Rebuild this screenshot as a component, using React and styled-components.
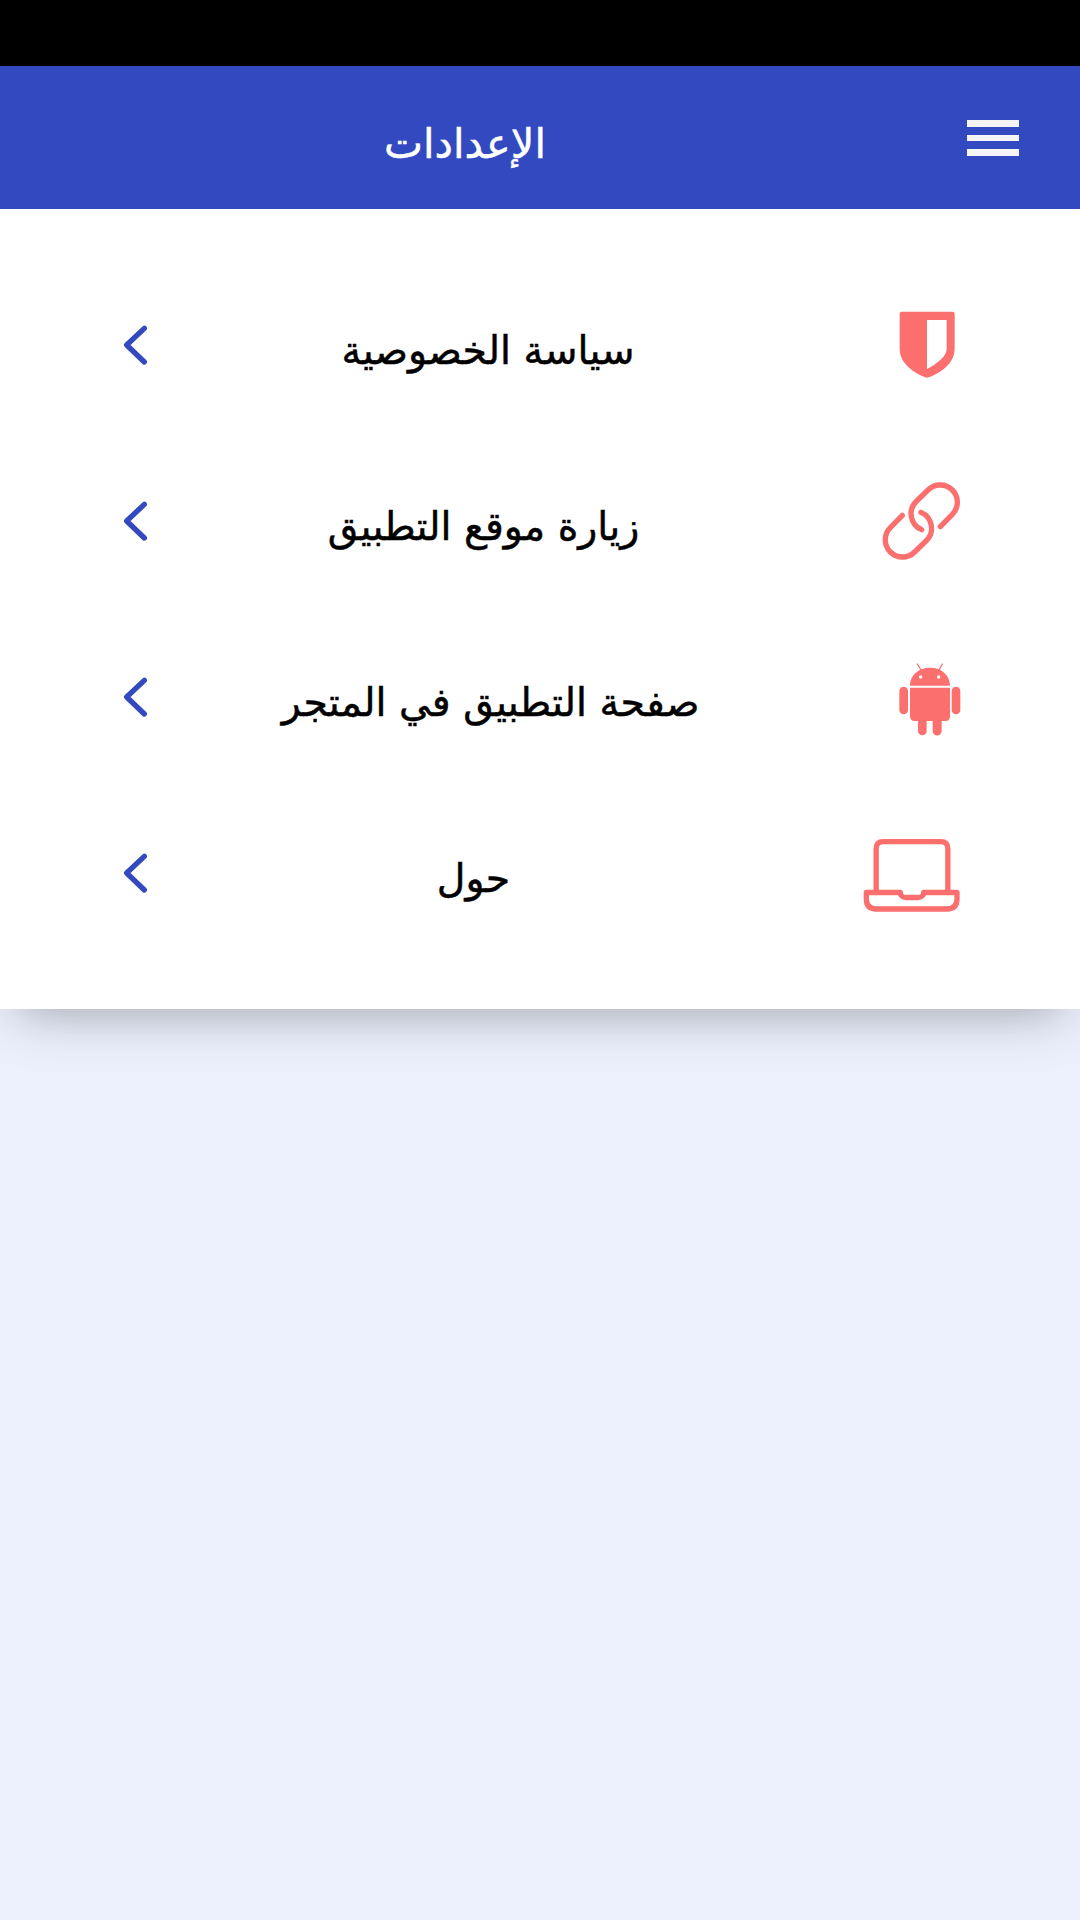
import React from "react";
import styled, { createGlobalStyle } from "styled-components";

const GlobalStyle = createGlobalStyle`
    * {
        box-sizing: border-box;
    }
    body {
        margin: 0;
        background: #ecf0fd;
        font-family: "DejaVu Sans", "Noto Sans", sans-serif;
    }
`;

const Page = styled.div`
    display: flex;
    flex-direction: column;
    min-height: 1920px;
    overflow: hidden;
`;

const StatusBar = styled.div`
    height: 66px;
    background: #000;
`;

const Header = styled.header`
    position: relative;
    z-index: 1;
    display: flex;
    align-items: center;
    justify-content: space-between;
    height: 143px;
    padding: 0 61px 0 384px;
    background: #3249bf;
    color: #fff;
`;

const MenuButton = styled.button`
    display: flex;
    flex-direction: column;
    gap: 8px;
    width: 52px;
    margin-top: 1px;
    padding: 0;
    border: 0;
    background: none;
`;

const MenuBar = styled.span`
    height: 6.5px;
    background: #f5f5f8;
`;

const Card = styled.main`
    padding: 48px 116px 48px 120px;
    background: #fff;
    box-shadow: 0 20px 50px -18px rgba(0, 0, 0, 0.34);
`;

const Row = styled.div`
    display: flex;
    align-items: center;
    height: 176px;
`;

const Label = styled.div`
    display: flex;
    justify-content: center;
    width: ${({ $width }) => $width}px;
    margin: 0 auto 0 ${({ $start }) => $start}px;
    padding-top: 10px;
    white-space: nowrap;
    direction: rtl;
    font-size: 39.4px;
    line-height: 60px;
    -webkit-text-stroke: 0.5px currentColor;
`;

const Title = styled.h1`
    margin: 0;
    padding-top: 12px;
    direction: rtl;
    font-size: 41.4px;
    font-weight: 400;
    line-height: 60px;
    -webkit-text-stroke: 0.5px currentColor;
`;

const RowIcon = styled.svg`
    flex: none;
    width: 104px;
    height: 88px;
    fill: #fb6f6e;
`;

const LineIcon = styled(RowIcon)`
    fill: none;
    stroke: #fb6f6e;
    stroke-width: 16;
    stroke-linecap: round;
    stroke-linejoin: round;
`;

const Arrow = styled.svg`
    flex: none;
    width: 32px;
    height: 44px;
    fill: none;
    stroke: #3249bf;
    stroke-width: 16;
    stroke-linecap: round;
    stroke-linejoin: round;
`;

const ShieldIcon = () => (
    <RowIcon viewBox="0 0 312 264">
        <path
            fillRule="evenodd"
            d="M125 32H277Q284 32 284 39V143C284 184 247 214 206 229Q201 231 196 229C156 213 119 184 119 143V39Q119 32 125 32ZM201 57V204C231 188 260 166 260 143V57Z"
        />
    </RowIcon>
);

const LinkIcon = () => (
    <LineIcon viewBox="0 0 312 264">
        <path d="M241 149L277 112A51 51 0 0 0 204 39L170 72A52 52 0 0 0 185 158" />
        <path d="M127 115L91 152A51 51 0 0 0 164 225L198 192A52 52 0 0 0 183 106" />
    </LineIcon>
);

const AndroidIcon = () => (
    <RowIcon viewBox="0 0 312 264">
        <path
            fillRule="evenodd"
            d="M150 98C150 65 177 44 210 44S270 65 270 98ZM187 72a5 5 0 1 0-10 0a5 5 0 1 0 10 0M241 72a5 5 0 1 0-10 0a5 5 0 1 0 10 0"
        />
        <path
            d="M172 33L183 51M247 33L237 51"
            stroke="#fb6f6e"
            strokeWidth="4"
            strokeLinecap="round"
        />
        <rect x="118" y="101" width="26" height="83" rx="13" />
        <rect x="275" y="101" width="26" height="83" rx="13" />
        <path d="M150 104H270V190Q270 204 256 204H245V234A13.5 13.5 0 0 1 218 234V204H200V234A13 13 0 0 1 174 234V204H164Q150 204 150 190Z" />
    </RowIcon>
);

const LaptopIcon = () => (
    <LineIcon viewBox="0 0 312 264">
        <path d="M48.5 187V59Q48.5 38 69.5 38H242.5Q263.5 38 263.5 59V187" />
        <path d="M19 190.5H121C121 199 128 205.500 137 205.500H175C184 205.500 191 199 191 190.500H291V210Q291 240 261 240H49Q19 240 19 210Z" />
    </LineIcon>
);

const items = [
    { text: "سياسة الخصوصية", start: 190, width: 292, Icon: ShieldIcon },
    { text: "زيارة موقع التطبيق", start: 177, width: 309, Icon: LinkIcon },
    { text: "صفحة التطبيق في المتجر", start: 131, width: 415, Icon: AndroidIcon },
    { text: "حول", start: 288, width: 67, Icon: LaptopIcon },
];

function App() {
    return (
        <Page>
            <GlobalStyle />
            <StatusBar />
            <Header>
                <Title>الإعدادات</Title>
                <MenuButton aria-label="القائمة">
                    <MenuBar />
                    <MenuBar />
                    <MenuBar />
                </MenuButton>
            </Header>
            <Card>
                {items.map(({ text, start, width, Icon }) => (
                    <Row key={text}>
                        <Arrow viewBox="0 0 96 132">
                            <path d="M73 16L20 66L73 117" />
                        </Arrow>
                        <Label $start={start} $width={width}>
                            {text}
                        </Label>
                        <Icon />
                    </Row>
                ))}
            </Card>
        </Page>
    );
}

export default App;
